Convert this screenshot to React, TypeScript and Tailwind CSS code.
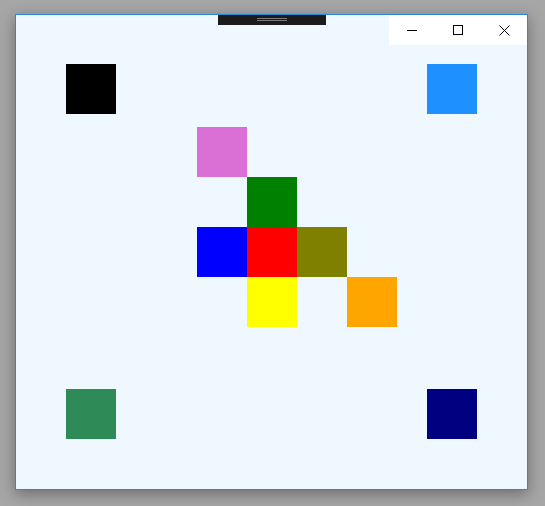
const Square = ({ color, className = "" }: { color: string; className?: string }) => (
  <div className={`w-[50px] h-[50px] ${color} ${className}`} />
);

const WindowControls = () => (
  <div className="absolute top-0 right-0 flex h-[30px] bg-white">
    <div className="w-[46px] flex items-center justify-center">
      <svg width="10" height="10" viewBox="0 0 10 10">
        <path d="M0 5.5H10" stroke="#000" strokeWidth="1" />
      </svg>
    </div>
    <div className="w-[46px] flex items-center justify-center">
      <svg width="10" height="10" viewBox="0 0 10 10">
        <rect x="0.5" y="0.5" width="9" height="9" fill="none" stroke="#000" strokeWidth="1" />
      </svg>
    </div>
    <div className="w-[46px] flex items-center justify-center">
      <svg width="11" height="11" viewBox="0 0 11 11">
        <path d="M0.5 0.5L10.5 10.5M10.5 0.5L0.5 10.5" stroke="#000" strokeWidth="1" />
      </svg>
    </div>
  </div>
);

export default function App() {
  return (
    <div className="w-[545px] h-[506px] bg-[#a6a6a6] pt-[14px] pl-[15px] overflow-hidden">
      <div className="relative w-[513px] h-[476px] border border-[#2b88d8] bg-[#f0f8ff] shadow-[0_4px_14px_rgba(0,0,0,0.35)]">
        {/* drag handle */}
        <div className="absolute top-0 left-[202px] w-[108px] h-[10px] bg-[#1b1b1b] flex flex-col items-center pt-[3px] gap-[1px]">
          <div className="w-[30px] h-px bg-[#7a7a7a]" />
          <div className="w-[30px] h-px bg-[#7a7a7a]" />
        </div>
        <WindowControls />

        <div className="flex flex-col h-full">
          <div className="flex justify-between pt-[49px] px-[50px]">
            <Square color="bg-[#000000]" />
            <Square color="bg-[#1e90ff]" />
          </div>

          <div className="mt-[13px] ml-[181px] grid grid-cols-[repeat(4,50px)] grid-rows-[repeat(4,50px)]">
            <Square color="bg-[#da70d6]" className="col-start-1 row-start-1" />
            <Square color="bg-[#008000]" className="col-start-2 row-start-2" />
            <Square color="bg-[#0000ff]" className="col-start-1 row-start-3" />
            <Square color="bg-[#ff0000]" className="col-start-2 row-start-3" />
            <Square color="bg-[#808000]" className="col-start-3 row-start-3" />
            <Square color="bg-[#ffff00]" className="col-start-2 row-start-4" />
            <Square color="bg-[#ffa500]" className="col-start-4 row-start-4" />
          </div>

          <div className="flex justify-between mt-[62px] px-[50px]">
            <Square color="bg-[#2e8b57]" />
            <Square color="bg-[#000080]" />
          </div>
        </div>
      </div>
    </div>
  );
}
